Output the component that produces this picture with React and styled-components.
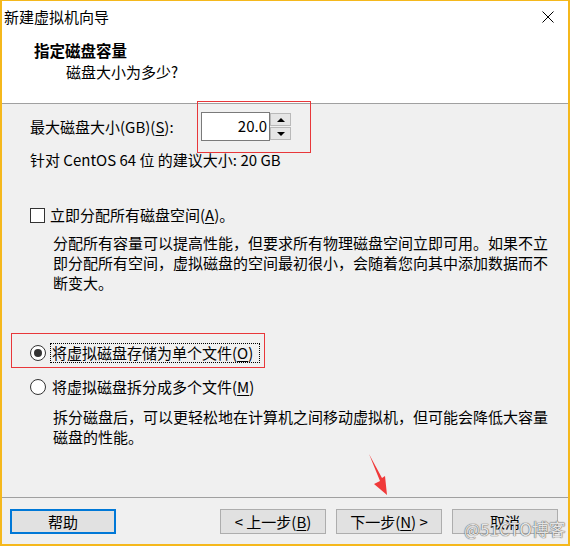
import React from "react";
import styled, { createGlobalStyle } from "styled-components";

const GlobalStyle = createGlobalStyle`
   html, body {
      margin: 0;
      padding: 0;
      background: #ffffff;
   }
   * {
      box-sizing: border-box;
   }
`;

const Window = styled.div`
   position: relative;
   width: 570px;
   height: 546px;
   display: flex;
   flex-direction: column;
   border: 2px solid #f5b81c;
   border-top-width: 1px;
   font-family: "Noto Sans CJK SC", "Noto Sans", sans-serif;
   font-size: 15px;
   line-height: 20px;
   color: #000;
   background: #f0f0f0;
   overflow: hidden;
`;

const TitleBar = styled.div`
   height: 31px;
   flex: none;
   display: flex;
   align-items: center;
   justify-content: space-between;
   padding: 0 14px 0 2px;
   background: #fff;
   .caption {
      margin-top: 1px;
   }
`;

const Header = styled.div`
   height: 72px;
   flex: none;
   background: #fff;
   border-bottom: 1px solid #a0a0a0;
   padding: 8px 0 0 32px;
   .title {
      font-size: 15.5px;
      font-weight: 700;
   }
   .subtitle {
      margin: 2px 0 0 32px;
   }
`;

const Body = styled.div`
   flex: 1;
   display: flex;
   flex-direction: column;
   align-items: flex-start;
   padding: 0 0 0 28px;
   background: #f0f0f0;
`;

const SizeRow = styled.div`
   display: flex;
   align-items: center;
   margin-top: 8px;
   height: 29px;
   .label {
      width: 171px;
   }
`;

const SpinBox = styled.div`
   display: flex;
   height: 29px;
`;

const NumberField = styled.div`
   width: 69px;
   height: 29px;
   border: 1px solid #7a7a7a;
   background: #fff;
   text-align: right;
   padding: 3px 2px 0 0;
`;

const SpinButtons = styled.div`
   width: 21px;
   display: flex;
   flex-direction: column;
   gap: 1px;
   padding: 1px 0;
`;

const SpinButton = styled.div`
   flex: 1;
   display: flex;
   align-items: center;
   justify-content: center;
   background: #e5e5e5;
   border: 1px solid #b9b9b9;
`;

const Arrow = styled.span`
   width: 0;
   height: 0;
   border-left: 4px solid transparent;
   border-right: 4px solid transparent;
   ${(p) => (p.$up ? "border-bottom: 4px solid #000;" : "border-top: 4px solid #000;")}
`;

const Line = styled.div`
   margin-top: ${(p) => p.$mt || 0}px;
   white-space: nowrap;
`;

const OptionRow = styled.div`
   display: flex;
   align-items: center;
   height: 20px;
   margin-top: ${(p) => p.$mt}px;
`;

const CheckBox = styled.span`
   width: 15px;
   height: 15px;
   border: 1px solid #333;
   background: #fff;
   margin-right: 5px;
`;

const Radio = styled.span`
   width: 16px;
   height: 16px;
   border-radius: 50%;
   border: 1px solid #333;
   background: #fff;
   margin-right: 4px;
   display: flex;
   align-items: center;
   justify-content: center;
   &::after {
      content: "";
      width: 8px;
      height: 8px;
      border-radius: 50%;
      background: ${(p) => (p.$checked ? "#333" : "transparent")};
   }
`;

const OptionLabel = styled.span`
   height: 20px;
   padding: 0 6px 0 1px;
   border: 1px dotted ${(p) => (p.$focus ? "#000" : "transparent")};
   display: flex;
   align-items: center;
`;

const Description = styled.div`
   margin-top: ${(p) => p.$mt}px;
   margin-left: 23px;
   white-space: nowrap;
`;

const Key = styled.span`
   text-decoration: underline;
   text-underline-offset: 2px;
`;

const Footer = styled.div`
   height: 47px;
   flex: none;
   display: flex;
   align-items: flex-start;
   padding: 11px 10px 0 8px;
   border-top: 1px solid #a0a0a0;
   background: #f0f0f0;
   .nav {
      margin-left: auto;
      display: flex;
      gap: 10px;
   }
`;

const Button = styled.div`
   width: 106px;
   height: 25px;
   display: flex;
   align-items: center;
   justify-content: center;
   background: #e1e1e1;
   border: ${(p) => (p.$default ? "2px solid #0078d7" : "1px solid #adadad")};
   white-space: nowrap;
`;

const Mark = styled.div`
   position: absolute;
   border: 1px solid #e8373a;
   pointer-events: none;
`;

const Watermark = styled.div`
   position: absolute;
   left: 462px;
   top: 517px;
   font-size: 17px;
   line-height: 22px;
   color: rgba(255, 255, 255, 0.85);
   text-shadow: 0 0 1px #555, 0 0 1px #555;
   white-space: nowrap;
`;

const Pointer = styled.svg`
   position: absolute;
   left: 360px;
   top: 450px;
`;

const App = () => {
   return (
      <>
         <GlobalStyle />
         <Window>
            <TitleBar>
               <span className="caption">新建虚拟机向导</span>
               <svg width="12" height="12" viewBox="0 0 12 12">
                  <path d="M0.5 0.5 L11.5 11.5 M11.5 0.5 L0.5 11.5" stroke="#000" strokeWidth="1" />
               </svg>
            </TitleBar>
            <Header>
               <div className="title">指定磁盘容量</div>
               <div className="subtitle">磁盘大小为多少?</div>
            </Header>
            <Body>
               <SizeRow>
                  <span className="label">
                     最大磁盘大小(GB)(<Key>S</Key>):
                  </span>
                  <SpinBox>
                     <NumberField>20.0</NumberField>
                     <SpinButtons>
                        <SpinButton><Arrow $up /></SpinButton>
                        <SpinButton><Arrow /></SpinButton>
                     </SpinButtons>
                  </SpinBox>
               </SizeRow>
               <Line $mt={9}>针对 CentOS 64 位 的建议大小: 20 GB</Line>

               <OptionRow $mt={35}>
                  <CheckBox />
                  <span>立即分配所有磁盘空间(<Key>A</Key>)。</span>
               </OptionRow>
               <Description $mt={8}>
                  分配所有容量可以提高性能，但要求所有物理磁盘空间立即可用。如果不立<br />
                  即分配所有空间，虚拟磁盘的空间最初很小，会随着您向其中添加数据而不<br />
                  断变大。
               </Description>

               <OptionRow $mt={50}>
                  <Radio $checked />
                  <OptionLabel $focus>将虚拟磁盘存储为单个文件(<Key>O</Key>)</OptionLabel>
               </OptionRow>
               <OptionRow $mt={14}>
                  <Radio />
                  <OptionLabel>将虚拟磁盘拆分成多个文件(<Key>M</Key>)</OptionLabel>
               </OptionRow>
               <Description $mt={10}>
                  拆分磁盘后，可以更轻松地在计算机之间移动虚拟机，但可能会降低大容量<br />
                  磁盘的性能。
               </Description>
            </Body>
            <Footer>
               <Button $default>帮助</Button>
               <div className="nav">
                  <Button>&lt; 上一步(<Key>B</Key>)</Button>
                  <Button>下一步(<Key>N</Key>) &gt;</Button>
                  <Button>取消</Button>
               </div>
            </Footer>

            <Mark style={{ left: 195, top: 100, width: 114, height: 52 }} />
            <Mark style={{ left: 9, top: 332, width: 254, height: 35 }} />
            <Pointer width="30" height="48" viewBox="0 0 30 48">
               <polygon points="7,3 18,30 12,33 25,44 23,25 20,27" fill="#f03a3a" />
            </Pointer>
            <Watermark>@51CTO博客</Watermark>
         </Window>
      </>
   );
};

export default App;
